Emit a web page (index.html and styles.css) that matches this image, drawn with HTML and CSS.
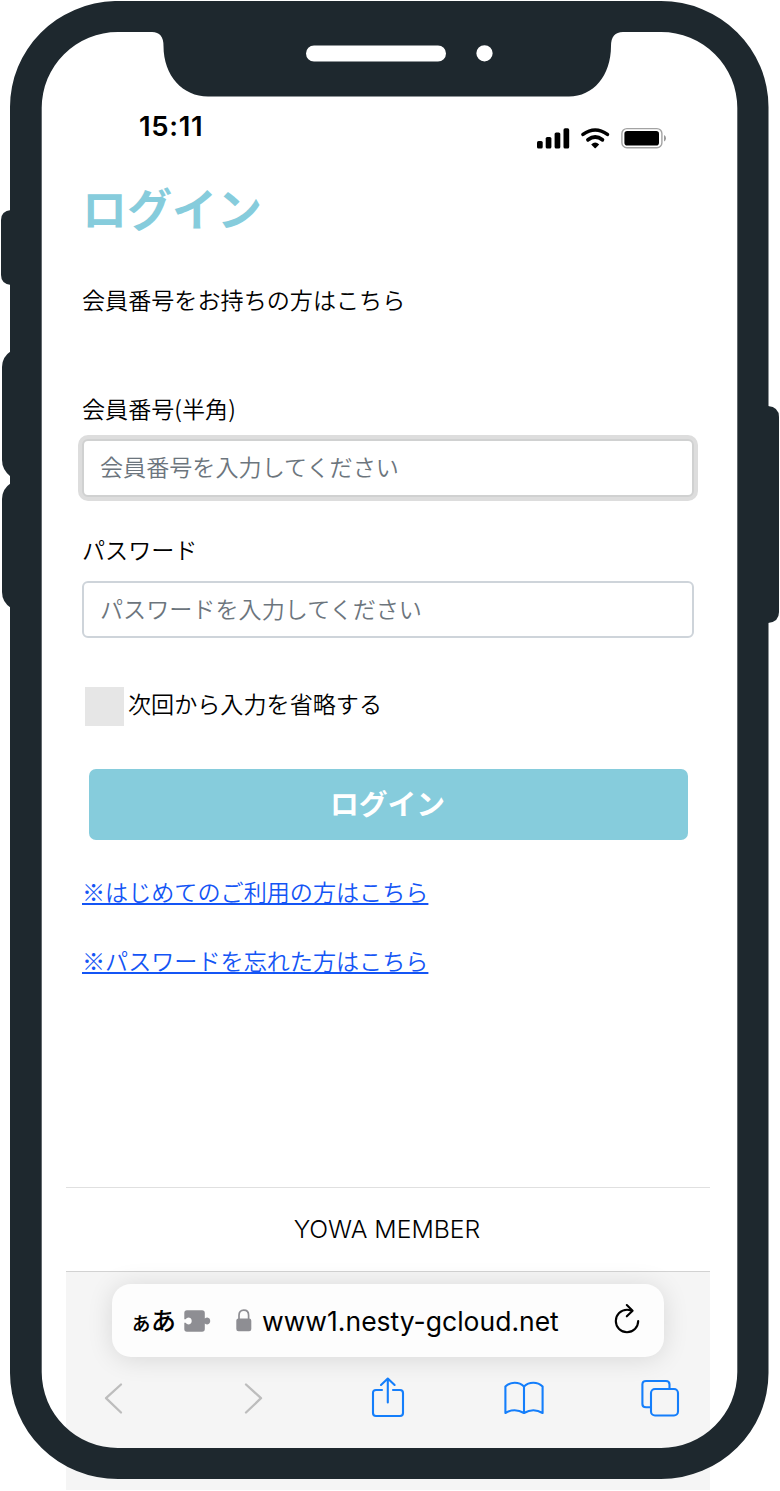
FILE: index.html
```html
<!DOCTYPE html>
<html lang="ja">
<head>
    <meta charset="UTF-8">
    <meta name="viewport" content="width=device-width, initial-scale=1.0">
    <title>ログイン</title>
    <link rel="stylesheet" href="styles.css">
</head>
<body>
    <div class="phone">
        <div class="screen">
            <div class="status-bar">
                <span class="time">15:11</span>
                <svg class="status-icons" width="130" height="24" viewBox="0 0 130 24">
                    <rect x="0" y="14" width="5.7" height="7.5" rx="1.6"/>
                    <rect x="8.7" y="10" width="5.7" height="11.5" rx="1.6"/>
                    <rect x="17.6" y="5.5" width="5.7" height="16" rx="1.6"/>
                    <rect x="26.5" y="1.3" width="5.7" height="20.2" rx="1.6"/>
                    <path d="M46 7.4Q58.2 -1.4 70.4 7.4" fill="none" stroke="#000" stroke-width="3.6" stroke-linecap="round"/>
                    <path d="M51 12.8Q58.2 7.2 65.4 12.8" fill="none" stroke="#000" stroke-width="3.8" stroke-linecap="round"/>
                    <path d="M54.2 17.4Q58.2 13.6 62.2 17.4L58.8 20.9Q58.2 21.5 57.6 20.9Z"/>
                    <rect x="84.9" y="1.6" width="40" height="19.2" rx="5" fill="none" stroke="#a3a3a3" stroke-width="1.4"/>
                    <rect x="87.4" y="4" width="34.6" height="14.6" rx="2.8"/>
                    <path d="M127 8v6.4q2-1 2-3.2t-2-3.2z" fill="#999"/>
                </svg>
            </div>

            <form class="login-form">
                <h1>ログイン</h1>
                <p class="lead">会員番号をお持ちの方はこちら</p>

                <label for="member">会員番号(半角)</label>
                <input type="text" id="member" class="field focused" placeholder="会員番号を入力してください">

                <label for="password">パスワード</label>
                <input type="password" id="password" class="field" placeholder="パスワードを入力してください">

                <label class="remember"><input type="checkbox">次回から入力を省略する</label>

                <button type="button">ログイン</button>

                <a href="#">※はじめてのご利用の方はこちら</a>
                <a href="#">※パスワードを忘れた方はこちら</a>
            </form>

            <div class="member">YOWA MEMBER</div>

            <div class="browser">
                <div class="address">
                    <span class="reader"><small>ぁ</small>あ</span>
                    <svg class="puzzle" width="27" height="22" viewBox="0 0 27 22">
                        <path fill="#8e8e93" d="M3 .3H18Q20.8 .3 20.8 3V8.6Q22 7.6 23.3 7.6A3.5 3.5 0 0 1 23.3 14.5Q22 14.5 20.8 13.4V19Q20.8 21.8 18 21.8H3Q.3 21.8 .3 19V12.8H1.6Q2.7 14.5 4.8 14.5A3.5 3.5 0 0 0 4.8 7.6Q2.7 7.6 1.6 9.3H.3V3Q.3 .3 3 .3Z"/>
                    </svg>
                    <svg class="lock" width="16" height="23" viewBox="0 0 16 23">
                        <rect x=".3" y="9.5" width="15" height="12.7" rx="2.2" fill="#8e8e93"/>
                        <path d="M3 10.5V6.3Q3 1.2 7.8 1.2T12.6 6.3V10.5" fill="none" stroke="#8e8e93" stroke-width="1.7"/>
                    </svg>
                    <span class="url">www1.nesty-gcloud.net</span>
                    <svg class="reload" width="26" height="32" viewBox="0 0 26 32" fill="none" stroke="#000" stroke-width="2.1" stroke-linecap="round" stroke-linejoin="round">
                        <path d="M17 7.4Q15 6.8 13 6.8A11.2 11.2 0 1 0 24.2 18"/>
                        <path d="M12.8 2L18.6 7.7L12.8 13.3"/>
                    </svg>
                </div>
                <div class="toolbar">
                    <svg class="back" width="20" height="40" viewBox="0 0 20 40" fill="none" stroke="#bdbdbd" stroke-width="2.3" stroke-linecap="round" stroke-linejoin="round">
                        <path d="M17 6.5L2 20.2L17 34.5"/>
                    </svg>
                    <svg class="forward" width="20" height="40" viewBox="0 0 20 40" fill="none" stroke="#bdbdbd" stroke-width="2.3" stroke-linecap="round" stroke-linejoin="round">
                        <path d="M3 6.5L18 20.2L3 34.5"/>
                    </svg>
                    <svg class="share" width="34" height="42" viewBox="0 0 34 42" fill="none" stroke="#147efb" stroke-width="2.1" stroke-linecap="round" stroke-linejoin="round">
                        <path d="M11 13H5Q2 13 2 16V36Q2 39 5 39H29Q32 39 32 36V16Q32 13 29 13H22"/>
                        <path d="M16.8 25.5V1.5M10 8L16.8 1.5L23.6 8"/>
                    </svg>
                    <svg class="book" width="40" height="40" viewBox="0 0 40 40" fill="none" stroke="#147efb" stroke-width="2.1" stroke-linejoin="round">
                        <path d="M20 8.5C15 3.5 6.5 3.5 1.4 8.5V35Q10.5 29.5 20 35Q29.500 29.5 38.6 35V8.5C33.5 3.5 25 3.5 20 8.5V35"/>
                    </svg>
                    <svg class="tabs" width="40" height="40" viewBox="0 0 40 40" fill="none" stroke="#147efb" stroke-width="2.1">
                        <path d="M10.5 29.3H6Q2.4 29.3 2.4 26V6.500Q2.4 3 6 3H26Q29.5 3 29.5 6.5V10.5"/>
                        <rect x="11" y="11" width="27" height="26.500" rx="4"/>
                    </svg>
                </div>
            </div>
        </div>

        <!-- phone body with notch, speaker, camera and side buttons -->
        <svg class="frame" width="780" height="1491" viewBox="0 0 780 1491" fill="#1e282e">
            <path fill-rule="evenodd" d="M115 1H661A108 106 0 0 1 768.5 107V1373A108 106 0 0 1 661 1479H118A108 106 0 0 1 10 1373V107A108 106 0 0 1 115 1Z
                M118 32A76 76 0 0 0 41.7 108V1372A76 76 0 0 0 118 1448H661A76 76 0 0 0 737.3 1372V108A76 76 0 0 0 661 32H623Q611 32 611 46C611 76 593 96.5 569 96.5H208C183 96.5 163.5 76 163.5 46Q163.5 32 152 32Z
                M314 45.5H438A8 8 0 0 1 438 61.5H314A8 8 0 0 1 314 45.5Z
                M484.5 45.2A8 8 0 0 1 484.5 61.5A8 8 0 0 1 484.5 45.2Z"/>
            <path d="M11 210Q1 211 1 220V275Q1 284 11 285Z"/>
            <path d="M11 351Q2 357 2 367V460Q2 470 11 477Z"/>
            <path d="M11 483Q2 489 2 499V592Q2 602 11 608Z"/>
            <path d="M768 406Q779 407 779 417V612Q779 622 768 623Z"/>
        </svg>
    </div>
</body>
</html>
```
FILE: styles.css
```css
* {
    box-sizing: border-box;
}

body {
    margin: 0;
    background-color: #fff;
    color: #000;
    font-family: "Noto Sans CJK JP", sans-serif;
    font-size: 23.1px;
    font-weight: 350;
}

.phone {
    position: relative;
    width: 780px;
    height: 1491px;
    overflow: hidden;
}

.frame {
    position: absolute;
    top: 0;
    left: 0;
    pointer-events: none;
}

.screen {
    display: flex;
    flex-direction: column;
    width: 644px;
    height: 1490px;
    margin-left: 66px;
}

.status-bar {
    display: flex;
    justify-content: space-between;
    align-items: flex-end;
    height: 151px;
    padding: 0 43px 0 73px;
}

.time {
    font-family: Inter, sans-serif;
    font-size: 27.5px;
    font-weight: 600;
    line-height: 30px;
    margin-bottom: 10px;
    letter-spacing: 0.7px;
}

.login-form {
    display: flex;
    flex-direction: column;
    align-items: flex-start;
    height: 1036px;
    padding: 27px 16px 0;
}

h1 {
    margin: 0;
    color: #86ccdc;
    font-size: 45px;
    font-weight: 700;
    line-height: 60px;
}

.lead {
    margin: 44px 0 75px;
    line-height: 34px;
}

label {
    line-height: 34px;
}

.field {
    width: 612px;
    height: 57px;
    margin: 15px 0 35px;
    padding: 0 16px 3px;
    border: 2px solid #ced4da;
    border-radius: 6px;
    background-color: #fff;
    font: inherit;
    outline: none;
}

.focused {
    height: 58px;
    margin-top: 14px;
    padding-bottom: 5px;
    border-color: #d0d1d1;
    box-shadow: 0 0 0 4px #ddd;
}

.field::placeholder {
    color: #6c757d;
    opacity: 1;
}

.remember {
    display: flex;
    margin-top: 13px;
    gap: 4px;
}

.remember input {
    appearance: none;
    width: 39px;
    height: 39px;
    margin: 1px 0 0 3px;
    background-color: #e6e6e6;
}

button {
    width: 599px;
    height: 71px;
    margin: 43px 0 34px 7px;
    padding: 0 2px 4px 0;
    border: none;
    border-radius: 7px;
    background-color: #86ccdc;
    color: #fff;
    font-family: inherit;
    font-size: 28.8px;
    font-weight: 700;
}

a {
    margin-bottom: 35px;
    color: #1455f5;
    line-height: 34px;
    text-decoration-thickness: 2px;
    text-underline-offset: 2px;
}

.member {
    height: 84px;
    border-top: 1px solid #e0e0e0;
    font-family: Inter, sans-serif;
    font-size: 24.8px;
    font-weight: 300;
    line-height: 83px;
    padding-right: 2px;
    text-align: center;
}

.browser {
    height: 219px;
    padding: 12px 46px 0;
    border-top: 1px solid #d2d2d2;
    background-color: #f5f5f5;
}

.address {
    display: flex;
    align-items: center;
    width: 552px;
    height: 73px;
    padding: 0 24px 0 18px;
    border-radius: 19px;
    background-color: #fdfdfd;
    box-shadow: 0 2px 26px rgba(0, 0, 0, 0.12);
}

.reader {
    width: 54px;
    margin-top: -4px;
    font-size: 25px;
    font-weight: 500;
    letter-spacing: -1px;
    white-space: nowrap;
}

.reader small {
    font-size: 22px;
}

.lock {
    margin: 0 10px 0 25px;
}

.url {
    flex: 1;
    font-family: Inter, sans-serif;
    font-size: 26.5px;
    font-weight: 400;
    white-space: nowrap;
}

.reload {
    margin-top: -3px;
}

.toolbar {
    display: flex;
    align-items: center;
    height: 82px;
}

.toolbar svg {
    flex-shrink: 0;
}

.back {
    margin-left: -8px;
}

.forward {
    margin-left: 119px;
}

.share {
    margin-left: 108px;
}

.book {
    margin-left: 99px;
}

.tabs {
    margin-left: 96px;
}
```
